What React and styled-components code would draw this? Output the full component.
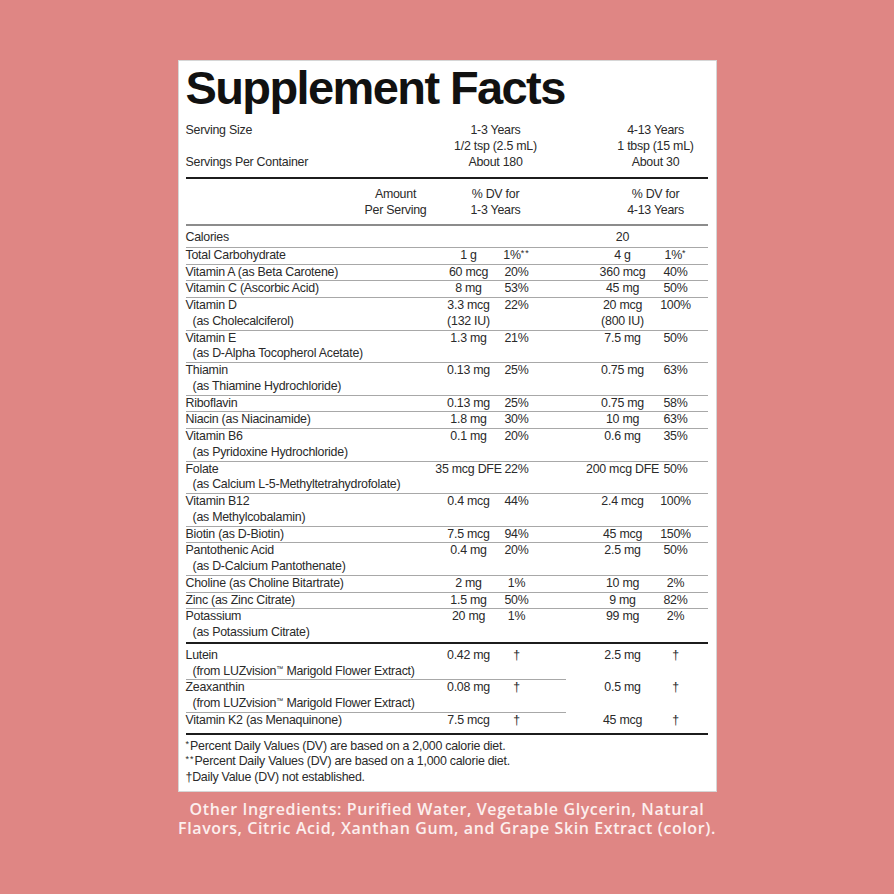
import React from 'react';
import styled, { createGlobalStyle } from 'styled-components';

const GlobalStyle = createGlobalStyle`
	body {
		margin: 0;
		background: #df8684;
	}
`;

const Page = styled.div`
	display: flex;
	flex-direction: column;
	align-items: center;
	padding-top: 60px;
	min-height: 834px;
`;

const Panel = styled.div`
	width: 539px;
	box-sizing: border-box;
	background: #fff;
	border: 1px solid #d6d6d6;
	padding: 0 8px 6px 7px;
	color: #2a2a2a;
	font-family: 'Liberation Sans', Arial, sans-serif;
	font-size: 12.4px;
	letter-spacing: -0.25px;
`;

const Title = styled.h1`
	margin: 0;
	font-weight: 700;
	font-size: 47px;
	line-height: 50px;
	letter-spacing: -1.6px;
	color: #111;
	padding-top: 2px;
`;

const HeadGrid = styled.div`
	display: grid;
	grid-template-columns: minmax(0, 1fr) 110px 55px 100px 2px;
	line-height: 16px;
	padding: ${(p) => p.$pad};
	border-bottom: 2px solid ${(p) => p.$rule};
`;

const HeadCell = styled.div`
	grid-column: ${(p) => p.$col || 1};
	white-space: nowrap;
	text-align: ${(p) => (p.$col ? 'center' : 'left')};
`;

const AmountHead = styled.div`
	grid-column: 1;
	justify-self: end;
	margin-right: 14px;
	text-align: center;
	white-space: nowrap;
`;

const Section = styled.div`
	padding: ${(p) => p.$pad};
	border-bottom: 2px solid #1c1c1c;
`;

const Group = styled.div`
	display: grid;
	grid-template-columns: minmax(0, 1fr) 64px 32px 58px 64px 42px 11px;
	line-height: 15.75px;
	padding-top: ${(p) => (p.$plain ? '0' : '1px')};
	padding-bottom: ${(p) => p.$bottom || 0};
	background: ${(p) =>
		p.$plain
			? 'none'
			: `linear-gradient(#a8a8a8, #a8a8a8) no-repeat left top / ${p.$line || '100%'} 1px`};
`;

const Name = styled.div`
	grid-column: 1;
	white-space: nowrap;
`;

const Sub = styled.div`
	padding-left: 7px;
`;

const Value = styled.div`
	grid-column: ${(p) => p.$col};
	display: flex;
	flex-direction: column;
	align-items: center;
	white-space: nowrap;
`;

const Star = styled.span`
	font-size: 9px;
	vertical-align: top;
	line-height: 11px;
	letter-spacing: 1px;
`;

const Tm = styled.span`
	font-size: 7px;
	vertical-align: top;
	line-height: 10px;
	letter-spacing: 0;
`;

const Notes = styled.div`
	padding-top: 4px;
	line-height: 15.5px;
`;

const Ingredients = styled.p`
	margin: 8px 0 0;
	font-family: 'Open Sans', 'Liberation Sans', sans-serif;
	font-weight: 600;
	font-size: 16px;
	letter-spacing: 0.6px;
	line-height: 19px;
	color: #fcefee;
	text-align: center;
`;

const vitamins = [
	{ name: 'Total Carbohydrate', a1: '1 g', d1: ['1%', '**'], a2: '4 g', d2: ['1%', '*'] },
	{ name: 'Vitamin A (as Beta Carotene)', a1: '60 mcg', d1: '20%', a2: '360 mcg', d2: '40%' },
	{ name: 'Vitamin C (Ascorbic Acid)', a1: '8 mg', d1: '53%', a2: '45 mg', d2: '50%' },
	{ name: 'Vitamin D', sub: '(as Cholecalciferol)', a1: ['3.3 mcg', '(132 IU)'], d1: '22%', a2: ['20 mcg', '(800 IU)'], d2: '100%' },
	{ name: 'Vitamin E', sub: '(as D-Alpha Tocopherol Acetate)', a1: '1.3 mg', d1: '21%', a2: '7.5 mg', d2: '50%' },
	{ name: 'Thiamin', sub: '(as Thiamine Hydrochloride)', a1: '0.13 mg', d1: '25%', a2: '0.75 mg', d2: '63%' },
	{ name: 'Riboflavin', a1: '0.13 mg', d1: '25%', a2: '0.75 mg', d2: '58%' },
	{ name: 'Niacin (as Niacinamide)', a1: '1.8 mg', d1: '30%', a2: '10 mg', d2: '63%' },
	{ name: 'Vitamin B6', sub: '(as Pyridoxine Hydrochloride)', a1: '0.1 mg', d1: '20%', a2: '0.6 mg', d2: '35%' },
	{ name: 'Folate', sub: '(as Calcium L-5-Methyltetrahydrofolate)', a1: '35 mcg DFE', d1: '22%', a2: '200 mcg DFE', d2: '50%' },
	{ name: 'Vitamin B12', sub: '(as Methylcobalamin)', a1: '0.4 mcg', d1: '44%', a2: '2.4 mcg', d2: '100%' },
	{ name: 'Biotin (as D-Biotin)', a1: '7.5 mcg', d1: '94%', a2: '45 mcg', d2: '150%' },
	{ name: 'Pantothenic Acid', sub: '(as D-Calcium Pantothenate)', a1: '0.4 mg', d1: '20%', a2: '2.5 mg', d2: '50%' },
	{ name: 'Choline (as Choline Bitartrate)', a1: '2 mg', d1: '1%', a2: '10 mg', d2: '2%' },
	{ name: 'Zinc (as Zinc Citrate)', a1: '1.5 mg', d1: '50%', a2: '9 mg', d2: '82%' },
	{ name: 'Potassium', sub: '(as Potassium Citrate)', a1: '20 mg', d1: '1%', a2: '99 mg', d2: '2%' },
];

const luz = (
	<>
		(from LUZvision<Tm>™</Tm> Marigold Flower Extract)
	</>
);

const extras = [
	{ name: 'Lutein', sub: luz, a1: '0.42 mg', d1: '†', a2: '2.5 mg', d2: '†', plain: true },
	{ name: 'Zeaxanthin', sub: luz, a1: '0.08 mg', d1: '†', a2: '0.5 mg', d2: '†', line: '380px' },
	{ name: 'Vitamin K2 (as Menaquinone)', a1: '7.5 mcg', d1: '†', a2: '45 mcg', d2: '†', line: '380px' },
];

const Lines = ({ value }) => {
	if (Array.isArray(value) && value[1].startsWith('*')) {
		return (
			<div>
				{value[0]}
				<Star>{value[1]}</Star>
			</div>
		);
	}
	const list = Array.isArray(value) ? value : [value];
	return list.map((v, i) => <div key={i}>{v}</div>);
};

const Row = ({ item }) => (
	<Group $plain={item.plain} $line={item.line}>
		<Name>
			<div>{item.name}</div>
			{item.sub && <Sub>{item.sub}</Sub>}
		</Name>
		<Value $col={2}>
			<Lines value={item.a1} />
		</Value>
		<Value $col={3}>
			<Lines value={item.d1} />
		</Value>
		<Value $col={5}>
			<Lines value={item.a2} />
		</Value>
		<Value $col={6}>
			<Lines value={item.d2} />
		</Value>
	</Group>
);

const App = () => (
	<>
		<GlobalStyle />
		<Page>
			<Panel>
				<Title>Supplement Facts</Title>
				<HeadGrid $pad="9px 0 7px" $rule="#1c1c1c">
					<HeadCell>Serving Size</HeadCell>
					<HeadCell $col={2}>1-3 Years</HeadCell>
					<HeadCell $col={4}>4-13 Years</HeadCell>
					<HeadCell />
					<HeadCell $col={2}>1/2 tsp (2.5 mL)</HeadCell>
					<HeadCell $col={4}>1 tbsp (15 mL)</HeadCell>
					<HeadCell>Servings Per Container</HeadCell>
					<HeadCell $col={2}>About 180</HeadCell>
					<HeadCell $col={4}>About 30</HeadCell>
				</HeadGrid>
				<HeadGrid $pad="7px 0 6px" $rule="#8c8c8c">
					<AmountHead>
						Amount
						<br />
						Per Serving
					</AmountHead>
					<HeadCell $col={2}>
						% DV for
						<br />
						1-3 Years
					</HeadCell>
					<HeadCell $col={4}>
						% DV for
						<br />
						4-13 Years
					</HeadCell>
				</HeadGrid>
				<Section $pad="4px 0 1px">
					<Group $plain $bottom="1px">
						<Name>Calories</Name>
						<Value $col={5}>20</Value>
					</Group>
					{vitamins.map((v) => (
						<Row key={v.name} item={v} />
					))}
				</Section>
				<Section $pad="4px 0 4px">
					{extras.map((v) => (
						<Row key={v.name} item={v} />
					))}
				</Section>
				<Notes>
					<div>
						<Star>*</Star>Percent Daily Values (DV) are based on a 2,000 calorie diet.
					</div>
					<div>
						<Star>**</Star>Percent Daily Values (DV) are based on a 1,000 calorie diet.
					</div>
					<div>†Daily Value (DV) not established.</div>
				</Notes>
			</Panel>
			<Ingredients>
				Other Ingredients: Purified Water, Vegetable Glycerin, Natural
				<br />
				Flavors, Citric Acid, Xanthan Gum, and Grape Skin Extract (color).
			</Ingredients>
		</Page>
	</>
);

export default App;
